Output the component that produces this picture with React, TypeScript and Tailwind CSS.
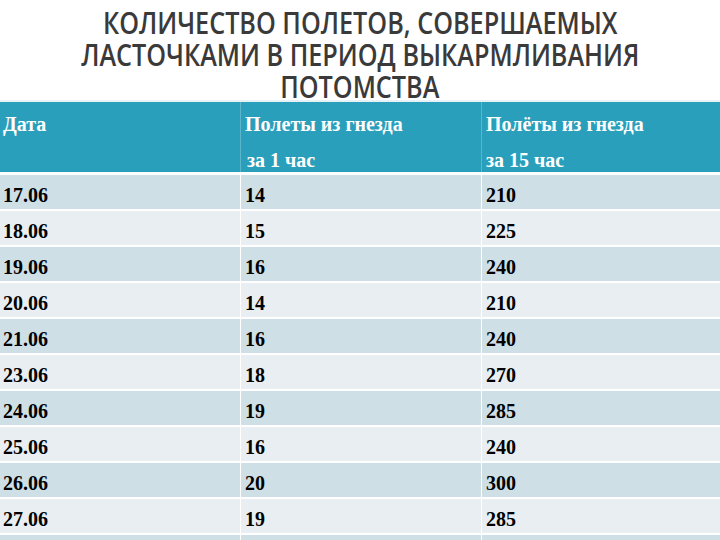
const rows = [
  ["17.06", "14", "210"],
  ["18.06", "15", "225"],
  ["19.06", "16", "240"],
  ["20.06", "14", "210"],
  ["21.06", "16", "240"],
  ["23.06", "18", "270"],
  ["24.06", "19", "285"],
  ["25.06", "16", "240"],
  ["26.06", "20", "300"],
  ["27.06", "19", "285"],
  ["", "", ""],
];

const App = () => {
  return (
    <div className="w-[720px] h-[540px] overflow-hidden bg-white">
      {/* Title */}
      <div className="h-[100px] pt-[7px] flex flex-col items-center text-[#3a3a3a] font-['Open_Sans',sans-serif] text-[30px] leading-[32px] font-semibold">
        <div className="scale-x-[0.84] whitespace-nowrap">КОЛИЧЕСТВО ПОЛЕТОВ, СОВЕРШАЕМЫХ</div>
        <div className="scale-x-[0.84] whitespace-nowrap">ЛАСТОЧКАМИ В ПЕРИОД ВЫКАРМЛИВАНИЯ</div>
        <div className="scale-x-[0.84] whitespace-nowrap">ПОТОМСТВА</div>
      </div>

      {/* Table */}
      <div className="border-t-2 border-[#e6f2f5] font-['Liberation_Serif',serif] font-bold">
        <div className="grid grid-cols-[240px_241px_239px] h-[70px] bg-[#2a9fbc] text-white text-[20px] leading-[24px]">
          <div className="pl-[3px] pt-[10px]">Дата</div>
          <div className="pl-[4px] pt-[10px] border-l border-[#5bb6cc]">
            <div>Полеты из гнезда</div>
            <div className="pl-[2px] mt-[12px]">за 1 час</div>
          </div>
          <div className="pl-[4px] pt-[10px] border-l border-[#5bb6cc]">
            <div>Полёты из гнезда</div>
            <div className="mt-[12px]">за 15 час</div>
          </div>
        </div>
        <div className="h-[3px] bg-white" />
        {rows.map((r, i) => (
          <div
            key={i}
            className={`grid grid-cols-[240px_241px_239px] h-[36px] border-b-2 border-white text-[20px] text-black ${
              i % 2 === 0 ? "bg-[#cfdfe6]" : "bg-[#e8eef1]"
            }`}
          >
            <div className="pl-[3px] pt-[8px] leading-[24px]">{r[0]}</div>
            <div className="pl-[4px] pt-[8px] leading-[24px] border-l border-white">{r[1]}</div>
            <div className="pl-[4px] pt-[8px] leading-[24px] border-l border-white">{r[2]}</div>
          </div>
        ))}
      </div>
    </div>
  );
};

export default App;
